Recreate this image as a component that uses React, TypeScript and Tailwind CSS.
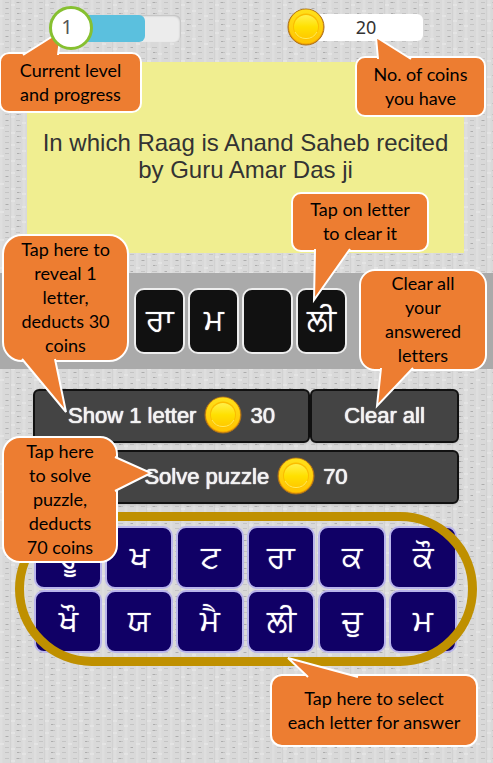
import type { ReactNode } from "react";

const answer = ["ਰਾ", "ਮ", "", "ਲੀ"];
const keys = ["ਰੂ", "ਖ", "ਟ", "ਰਾ", "ਕ", "ਕੌ", "ਖੌ", "ਯ", "ਮੈ", "ਲੀ", "ਚੁ", "ਮ"];

function Coin() {
  return (
    <svg viewBox="0 0 38 38" className="size-[38px] shrink-0" aria-hidden="true">
      <defs>
        <linearGradient id="coinFace" x1="0" y1="0" x2="0" y2="1">
          <stop offset="0" stopColor="#fff04a" />
          <stop offset="0.5" stopColor="#ffe000" />
          <stop offset="1" stopColor="#ffc800" />
        </linearGradient>
        <linearGradient id="coinRim" x1="0" y1="0" x2="0" y2="1">
          <stop offset="0" stopColor="#ffe01a" />
          <stop offset="1" stopColor="#ffc400" />
        </linearGradient>
      </defs>
      <circle cx="19" cy="19" r="18" fill="#f0a000" stroke="#a8701c" strokeWidth="1" />
      <circle cx="19" cy="18.500" r="17" fill="url(#coinRim)" />
      <circle cx="19" cy="18.500" r="13" fill="#fbbd00" />
      <circle cx="19" cy="19" r="12" fill="url(#coinFace)" />
      <path d="M8 24a12.500 12.500 0 0 0 22 0" fill="none" stroke="#ffe95a" strokeWidth="1" />
    </svg>
  );
}

function Texture() {
  return (
    <svg className="absolute inset-0 -z-10 size-full" aria-hidden="true">
      <defs>
        <pattern id="weave" width="34" height="28" patternUnits="userSpaceOnUse">
          <rect width="34" height="28" fill="#d9d9d9" />
          <path d="M1 0v28M13 0v28M24 0v28" stroke="#dedede" strokeWidth="3" />
          <path d="M10.500 0v28" stroke="#d2d2d2" strokeWidth="1" />
          <path
            d="M5 2.500h4M16 2.500h5M28 2.500h4M5 8.500h4M16 8.500h4M28 8.500h4M5 13.500h4M17 13.500h4M28 13.500h4M5 19.500h4M16 19.500h5M28 19.500h3M5 24.500h4M17 24.500h4M28 24.500h4"
            stroke="#c4c4c4"
            strokeWidth="1"
          />
          <path d="M17 2.500h2M17 13.500h2M17 24.500h2M6 8.500h2M29 19.500h2" stroke="#adadad" strokeWidth="1" />
          <path d="M11 5h4M22 11h4M0 16h4M11 21h4M22 26h4" stroke="#e4e4e4" strokeWidth="2" />
        </pattern>
      </defs>
      <rect width="100%" height="100%" fill="url(#weave)" />
    </svg>
  );
}

function Callout({ className, tail, children }: { className: string; tail: string; children: ReactNode }) {
  return (
    <div
      className={`absolute flex items-center justify-center border-2 border-white bg-[#ed7d31] pb-0.5 text-center font-[Lato,sans-serif] text-[18px] leading-6 text-black [font-variant-ligatures:none] ${className}`}
    >
      <svg className="absolute left-0 top-0 size-px overflow-visible" aria-hidden="true">
        <polyline points={tail} fill="#ed7d31" stroke="#fff" strokeWidth="2" />
      </svg>
      <span className="relative">{children}</span>
    </div>
  );
}

const dark =
  "flex h-[54px] items-center justify-center gap-2 rounded-md border-2 border-[#111] bg-[#444] pb-0.5 text-[22px] text-[#f2f2f2] shadow-sm [text-shadow:0_0_1px_#fff,0_0_1px_#fff]";

export default function App() {
  return (
    <main className="relative isolate min-h-screen overflow-hidden font-['Liberation_Sans',Arial,sans-serif]">
      <Texture />

      <header className="flex h-[62px] items-start justify-between pb-2 pl-[49px] pr-[70px] pt-1.5">
        <div className="flex items-center">
          <span className="z-10 flex size-11 items-center justify-center rounded-full border-3 border-[#86c030] bg-white pb-0.5 pr-2 font-['Noto_Sans',sans-serif] text-[20px] text-[#555]">
            1
          </span>
          <div className="-ml-3 h-[27px] w-[100px] overflow-hidden rounded-md bg-[#ececec] shadow-[inset_-1px_1px_2px_#bbb]">
            <div className="h-full w-16 rounded-r-md bg-[#5bc0de]" />
          </div>
        </div>
        <div className="flex items-center pt-0.5">
          <div className="z-10">
            <Coin />
          </div>
          <div className="-ml-3 mt-px flex h-[27px] w-[110px] items-center justify-center rounded-md bg-white pr-1 font-['Noto_Sans',sans-serif] text-[18px] text-[#333]">
            20
          </div>
        </div>
      </header>

      <section className="ml-[27px] mr-[29px] flex h-[191px] items-center justify-center bg-[#f0ee90] pb-1">
        <h1 className="text-center text-[24px] leading-[27px] text-[#333]">
          In which Raag is Anand Saheb recited
          <br />
          by Guru Amar Das ji
        </h1>
      </section>

      <section className="mt-5 flex h-24 items-center justify-center gap-[3px] bg-[#aaa] pr-3">
        {answer.map((letter, i) => (
          <button
            key={i}
            type="button"
            aria-label={letter ? undefined : "Empty letter"}
            className="h-[66px] w-[51px] rounded-[10px] border-2 border-[#eee] bg-[#111] pb-1 text-[30px] text-white [text-shadow:0_0_1px_#fff]"
          >
            {letter}
          </button>
        ))}
      </section>

      <section className="ml-[33px] mr-[34px] mt-5 flex flex-col gap-[7px]">
        <div className="flex">
          <button type="button" className={`${dark} grow`}>
            <span>Show 1 letter</span>
            <Coin />
            <span>30</span>
          </button>
          <button type="button" className={`${dark} w-[149px]`}>
            Clear all
          </button>
        </div>
        <button type="button" className={dark}>
          <span>Solve puzzle</span>
          <Coin />
          <span>70</span>
        </button>
      </section>

      <section className="relative ml-[34px] mr-9 mt-[22px] grid grid-cols-6 gap-x-[3px] gap-y-px">
        {keys.map((letter, i) => (
          <button
            key={i}
            type="button"
            className="h-[63px] rounded-[10px] border-2 border-[#b9b4ec] bg-[#100066] pb-0.5 text-[30px] text-white [text-shadow:0_0_1px_#fff]"
          >
            {letter}
          </button>
        ))}
        <div className="pointer-events-none absolute -bottom-[13px] -left-[19px] -right-5 -top-3.5 rounded-full border-9 border-[#bf9000]" />
      </section>

      <Callout className="-left-px top-[52px] h-[61px] w-[143px] rounded-[10px]" tail="22,1 60,-23 57,1">
        Current level
        <br />
        and progress
      </Callout>
      <Callout className="left-[355px] top-14 h-[61px] w-[131px] rounded-[10px]" tail="21,1 19,-21 54,1">
        No. of coins
        <br />
        you have
      </Callout>
      <Callout className="left-0.5 top-[234px] h-32 w-[127px] rounded-[20px]" tail="18,123 62,176 51,123">
        Tap here to
        <br />
        reveal 1
        <br />
        letter,
        <br />
        deducts 30
        <br />
        coins
      </Callout>
      <Callout className="left-[291px] top-48 h-[60px] w-[138px] rounded-[10px]" tail="22,55 21,106 57,55">
        Tap on letter
        <br />
        to clear it
      </Callout>
      <Callout className="left-[359px] top-[269px] h-[102px] w-32 rounded-2xl" tail="20,97 16,135 52,97">
        Clear all
        <br />
        your
        <br />
        answered
        <br />
        letters
      </Callout>
      <Callout className="left-0.5 top-[436px] h-[127px] w-[116px] rounded-[18px]" tail="111,19 147,35 111,53">
        Tap here
        <br />
        to solve
        <br />
        puzzle,
        <br />
        deducts
        <br />
        70 coins
      </Callout>
      <Callout className="left-[270px] top-[674px] h-[73px] w-[208px] rounded-xl" tail="36,1 16,-18 86,1">
        Tap here to select
        <br />
        each letter for answer
      </Callout>
    </main>
  );
}
